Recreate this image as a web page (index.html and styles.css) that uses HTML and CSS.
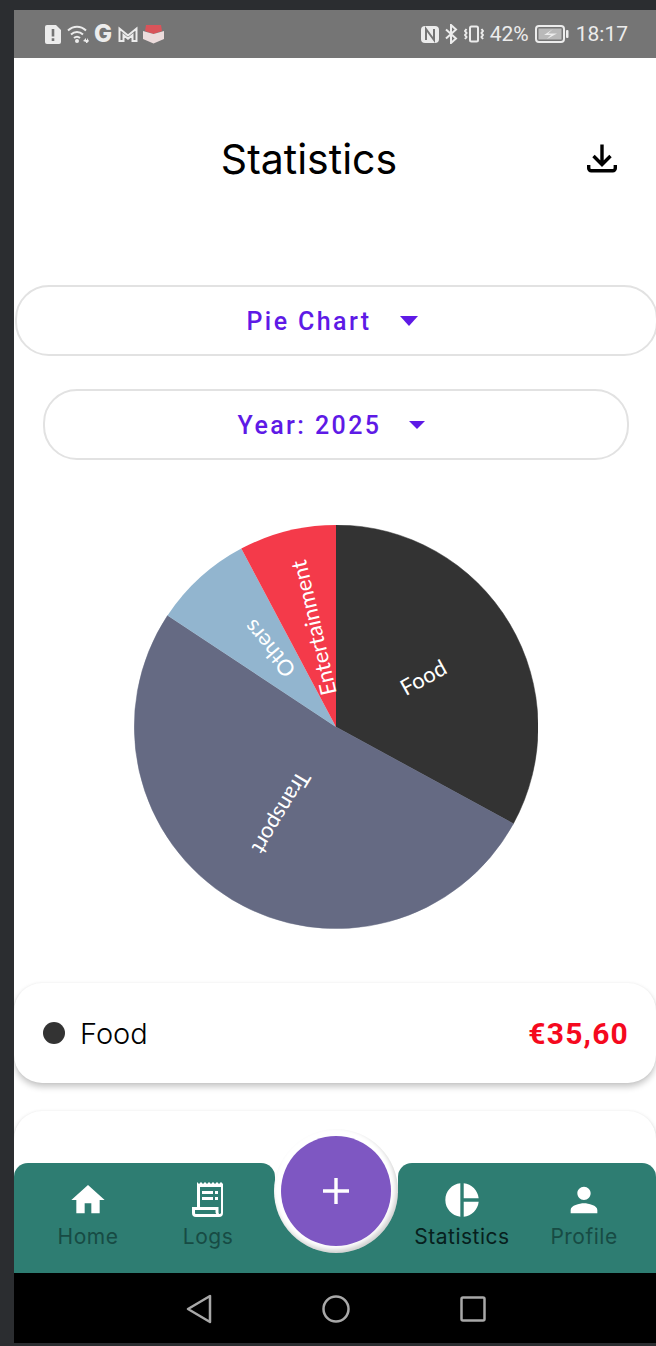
FILE: index.html
```html
<!DOCTYPE html>
<html lang="en">
<head>
<meta charset="utf-8">
<title>Statistics</title>
<link rel="stylesheet" href="styles.css">
</head>
<body>
<div class="device">
  <div class="statusbar">
    <div class="status-group">
      <svg class="st-icon" width="18" height="21" viewBox="0 0 18 21"><path class="st-fill" d="M3 1h9l5 5v12a2 2 0 0 1-2 2H3a2 2 0 0 1-2-2V3a2 2 0 0 1 2-2z"/><path class="st-cut" d="M7.700 5h2.600v7.500H7.700zM7.700 14.300h2.600V17H7.700z"/></svg>
      <svg class="st-icon" width="22" height="20" viewBox="0 0 22 20"><path class="st-line" d="M1 6.500c5.500-5 12.500-5 18 0M4 10.500c3.500-3.200 8.500-3.200 12 0M7 14c1.900-1.600 4.100-1.600 6 0"/><circle class="st-fill" cx="10" cy="17" r="2"/><path class="st-fill" d="M16 17l3-3v2h1v-2l2 3-2 2h-1v-1z"/></svg>
      <span class="st-g">G</span>
      <svg class="st-icon st-mail" width="20" height="17" viewBox="0 0 20 17"><path class="st-line" d="M1.500 15V2.500l8.500 7 8.500-7V15h-4V9l-4.500 3.700L5.500 9v6z"/></svg>
      <svg class="st-icon" width="21" height="20" viewBox="0 0 21 20"><path d="M3 1h15l1 6-8.500 3L2 7z" fill="#d9545a"/><path d="M0 7l10.500 3L21 7v8l-10.500 4.500L0 15z" fill="#ecdcdc"/></svg>
    </div>
    <div class="status-group status-right">
      <svg class="st-icon" width="18" height="19" viewBox="0 0 18 19"><rect class="st-fill" x="0" y="1" width="18" height="17" rx="4"/><path class="st-gap" d="M5 15V4l8 11V4"/></svg>
      <svg class="st-icon" width="13" height="20" viewBox="0 0 13 20"><path class="st-line" d="M1 5.500l10 9-5 4.500V1l5 4.500-10 9"/></svg>
      <svg class="st-icon" width="20" height="18" viewBox="0 0 20 18"><rect class="st-line" x="6" y="1.500" width="8" height="15" rx="1.500"/><path class="st-line" d="M2.500 4L1 6l1.500 2L1 10l1.500 2L1 14M17.500 4L19 6l-1.500 2L19 10l-1.500 2L19 14"/></svg>
      <span class="st-text">42%</span>
      <svg class="st-icon" width="34" height="18" viewBox="0 0 34 18"><rect class="st-line" x="1" y="1" width="28" height="16" rx="3"/><rect x="3.500" y="3.500" width="23" height="11" fill="#b9b9b9"/><path class="st-fill" d="M18 4l-5 4.500h9L12 14l4-4H9z"/><rect class="st-fill" x="31" y="5" width="2.500" height="8" rx="1"/></svg>
      <span class="st-text st-time">18:17</span>
    </div>
  </div>

  <main class="content">
    <header class="header">
      <h1 class="title">Statistics</h1>
      <svg class="download" width="30" height="30" viewBox="0 0 30 30"><path d="M15 1.500V21M6.500 13l8.500 8.500 8.500-8.500M1.700 22v3.300a2.500 2.500 0 0 0 2.500 2.500h21.600a2.500 2.500 0 0 0 2.500-2.500V22"/></svg>
    </header>

    <div class="select select-chart">
      <span class="select-label">Pie Chart</span>
      <span class="caret"></span>
    </div>
    <div class="select select-year">
      <span class="select-label">Year: 2025</span>
      <span class="caret caret-small"></span>
    </div>

    <svg class="pie" width="404" height="404" viewBox="-202 -202 404 404" role="img" aria-label="Pie chart of spending">
      <path class="slice-food" d="M0 0V-202A202 202 0 0 1 177.400 96.700Z"/>
      <path class="slice-transport" d="M0 0L177.400 96.700A202 202 0 1 1 -168.500 -111.400Z"/>
      <path class="slice-others" d="M0 0L-168.500 -111.400A202 202 0 0 1 -94.700 -178.400Z"/>
      <path class="slice-ent" d="M0 0L-94.700 -178.400A202 202 0 0 1 0 -202Z"/>
      <text class="pie-label" transform="translate(87 -50) rotate(-29)">Food</text>
      <text class="pie-label" transform="translate(-54 86) rotate(121)">Transport</text>
      <text class="pie-label" transform="translate(-67 -78) rotate(230)">Others</text>
      <text class="pie-label" transform="translate(-23 -99) rotate(-103)">Entertainment</text>
    </svg>

    <section class="card">
      <span class="dot"></span>
      <span class="card-name">Food</span>
      <span class="card-amount">€35,60</span>
    </section>
    <section class="card card-next"></section>
  </main>

  <nav class="tabbar">
    <div class="tab-group tab-group-left">
      <div class="tab">
        <svg class="tab-icon" width="40" height="40" viewBox="0 0 24 24"><path d="M10 20v-6h4v6h5v-8h3L12 3 2 12h3v8z"/></svg>
        <span class="tab-label">Home</span>
      </div>
      <div class="tab">
        <svg class="tab-icon" width="40" height="40" viewBox="0 0 40 40"><path fill-rule="evenodd" d="M9 2l2 2 2-2 2 2 2-2 2 2 2-2 2 2 2-2 2 2 2-2 2 2 2-2 2 2V33a4 4 0 0 1-4 4H8a4 4 0 0 1-4-4v-6h5zM12 7v20h18.500v5.500c0 .8.500 1.500 1.200 1.500s1.300-.7 1.300-1.500V7zM7 30v3c0 .6.400 1 1 1H28.300a4 4 0 0 1-.8-1.500V30z"/><path d="M14 11h11v3H14zM27 11h3v3h-3zM14 17h11v3H14zM27 17h3v3h-3z"/></svg>
        <span class="tab-label">Logs</span>
      </div>
    </div>
    <div class="tab-group tab-group-right">
      <div class="tab">
        <svg class="tab-icon" width="44" height="44" viewBox="0 0 24 24"><path d="M11 2v20c-5.070-.5-9-4.790-9-10s3.930-9.500 9-10zm2.030 0v8.990H22c-.47-4.740-4.240-8.520-8.970-8.990zm0 11.010V22c4.740-.47 8.500-4.250 8.970-8.990h-8.970z"/></svg>
        <span class="tab-label tab-label-active">Statistics</span>
      </div>
      <div class="tab">
        <svg class="tab-icon" width="40" height="40" viewBox="0 0 24 24"><path d="M12 12c2.210 0 4-1.790 4-4s-1.790-4-4-4-4 1.790-4 4 1.790 4 4 4zm0 2c-2.670 0-8 1.340-8 4v2h16v-2c0-2.660-5.330-4-8-4z"/></svg>
        <span class="tab-label">Profile</span>
      </div>
    </div>
    <div class="fab-ring">
      <div class="fab">
        <svg width="26" height="26" viewBox="0 0 26 26"><path d="M11.300 0h3.400v11.300H26v3.400H14.700V26h-3.400V14.700H0v-3.400h11.300z"/></svg>
      </div>
    </div>
  </nav>

  <div class="sysnav">
    <svg class="sys-icon" width="26" height="30" viewBox="0 0 26 30"><path d="M24 2v26L2 15z"/></svg>
    <svg class="sys-icon" width="28" height="28" viewBox="0 0 28 28"><circle cx="14" cy="14" r="12.500"/></svg>
    <svg class="sys-icon" width="26" height="26" viewBox="0 0 26 26"><rect x="1.500" y="1.500" width="23" height="23" rx="1.500"/></svg>
  </div>
</div>
</body>
</html>
```
FILE: styles.css
```css
* { box-sizing: border-box; }
html, body { margin: 0; padding: 0; }
body {
  width: 656px;
  height: 1346px;
  overflow: hidden;
  background: #2b2d30;
  font-family: "Inter", "Liberation Sans", sans-serif;
}
.device {
  display: flex;
  flex-direction: column;
  height: 1343px;
  margin-left: 14px;
  padding-top: 10px;
}

/* status bar */
.statusbar {
  flex: 0 0 48px;
  display: flex;
  justify-content: space-between;
  align-items: center;
  padding: 0 28px 0 30px;
  background: #757575;
  color: #ececec;
  font-size: 20px;
}
.status-group { display: flex; align-items: center; gap: 5px; }
.status-right { gap: 6px; }
.st-icon { display: block; }
.st-fill { fill: #ececec; }
.st-cut { fill: #757575; }
.st-gap { fill: none; stroke: #757575; stroke-width: 2; }
.st-line { fill: none; stroke: #ececec; stroke-width: 2; }
.st-g { font-weight: 800; font-size: 24px; line-height: 20px; width: 17px; text-align: center; }
.st-mail { margin-left: 2px; }
.st-text { font-family: "Roboto", sans-serif; line-height: 20px; font-size: 21px; }
.st-time { margin-left: 1px; }

/* page */
.content {
  flex: 1;
  min-height: 0;
  overflow: hidden;
  background: #fff;
}
.header {
  position: relative;
  height: 204px;
  display: flex;
  align-items: center;
  justify-content: center;
}
.title {
  margin: -2px 52px 0 0;
  font-size: 41px;
  font-weight: 400;
  color: #000;
}
.download {
  position: absolute;
  left: 573px;
  top: 85px;
  fill: none;
  stroke: #000;
  stroke-width: 3.400;
}
.select {
  display: flex;
  align-items: center;
  justify-content: center;
  gap: 28px;
  height: 71px;
  border: 2px solid #e2e2e2;
  border-radius: 34px;
  color: #5e1ae6;
}
.select-chart { margin: 23px -2px 0 1px; padding-right: 9px; }
.select-year { margin: 33px 27px 0 29px; padding-right: 9px; }
.select-label {
  margin-top: 2px;
  font-family: "Roboto", sans-serif;
  font-size: 25px;
  letter-spacing: 2.400px;
  font-weight: 500;
}
.caret {
  width: 0;
  height: 0;
  border-left: 9px solid transparent;
  border-right: 9px solid transparent;
  border-top: 10px solid #5e1ae6;
}
.caret-small { border-left-width: 8px; border-right-width: 8px; border-top-width: 8px; }

.pie { display: block; margin: 65px 0 0 120px; }
.slice-food { fill: #333333; stroke: #333333; stroke-width: .5; }
.slice-transport { fill: #656a83; stroke: #656a83; stroke-width: .5; }
.slice-others { fill: #92b5cf; }
.slice-ent { fill: #f43a4a; }
.pie-label {
  fill: #fff;
  font-family: "Lato", "Liberation Sans", sans-serif;
  font-size: 22px;
  text-anchor: middle;
  dominant-baseline: central;
}

.card {
  display: flex;
  align-items: center;
  height: 100px;
  margin-top: 54px;
  padding: 0 27px 0 29px;
  border-radius: 28px;
  background: #fff;
  box-shadow: 0 4px 6px rgba(0, 0, 0, .22), 0 0 3px rgba(0, 0, 0, .05);
}
.card-next { margin-top: 28px; }
.dot {
  width: 22px;
  height: 22px;
  border-radius: 50%;
  background: #333;
}
.card-name { margin-left: 15px; font-size: 29px; font-weight: 300; color: #000; }
.card-amount {
  margin-left: auto;
  font-family: "Roboto", sans-serif;
  font-size: 30px;
  font-weight: 700;
  letter-spacing: 1.200px;
  color: #f5091e;
}

/* bottom tab bar */
.tabbar {
  position: relative;
  flex: 0 0 110px;
  display: flex;
  justify-content: space-between;
  background: linear-gradient(#fff 30px, #2e7d72 30px);
}
.tab-group {
  display: grid;
  grid-template-columns: 120px 120px;
  background: #2e7d72;
  border-radius: 14px 14px 0 0;
}
.tab-group-left { width: 261px; padding-left: 14px; }
.tab-group-right { width: 258px; padding-left: 3px; grid-template-columns: 122px 122px; }
.tab {
  display: flex;
  flex-direction: column;
  align-items: center;
  height: 110px;
}
.tab-icon { display: block; margin-top: 17px; height: 40px; fill: #fff; }
.tab-label {
  margin-top: 4px;
  font-size: 21px;
  letter-spacing: .5px;
  color: #174b44;
}
.tab-label-active { color: #07201d; }
.fab-ring {
  position: absolute;
  left: 260px;
  top: -34px;
  display: flex;
  align-items: center;
  justify-content: center;
  width: 124px;
  height: 124px;
  border-radius: 50%;
  background: #fff;
  box-shadow: inset -2px -3px 5px rgba(0, 0, 0, .2);
}
.fab {
  display: flex;
  align-items: center;
  justify-content: center;
  width: 110px;
  height: 110px;
  border-radius: 50%;
  background: #7e57c2;
}
.fab svg { fill: #fff; }

/* system navigation */
.sysnav {
  flex: 0 0 70px;
  display: grid;
  grid-template-columns: 137px 137px 137px;
  justify-content: center;
  justify-items: center;
  align-items: center;
  padding: 2px 0 0 2px;
  background: #000;
}
.sys-icon { fill: none; stroke: #a8a8a8; stroke-width: 2.500; stroke-linejoin: round; }
```
